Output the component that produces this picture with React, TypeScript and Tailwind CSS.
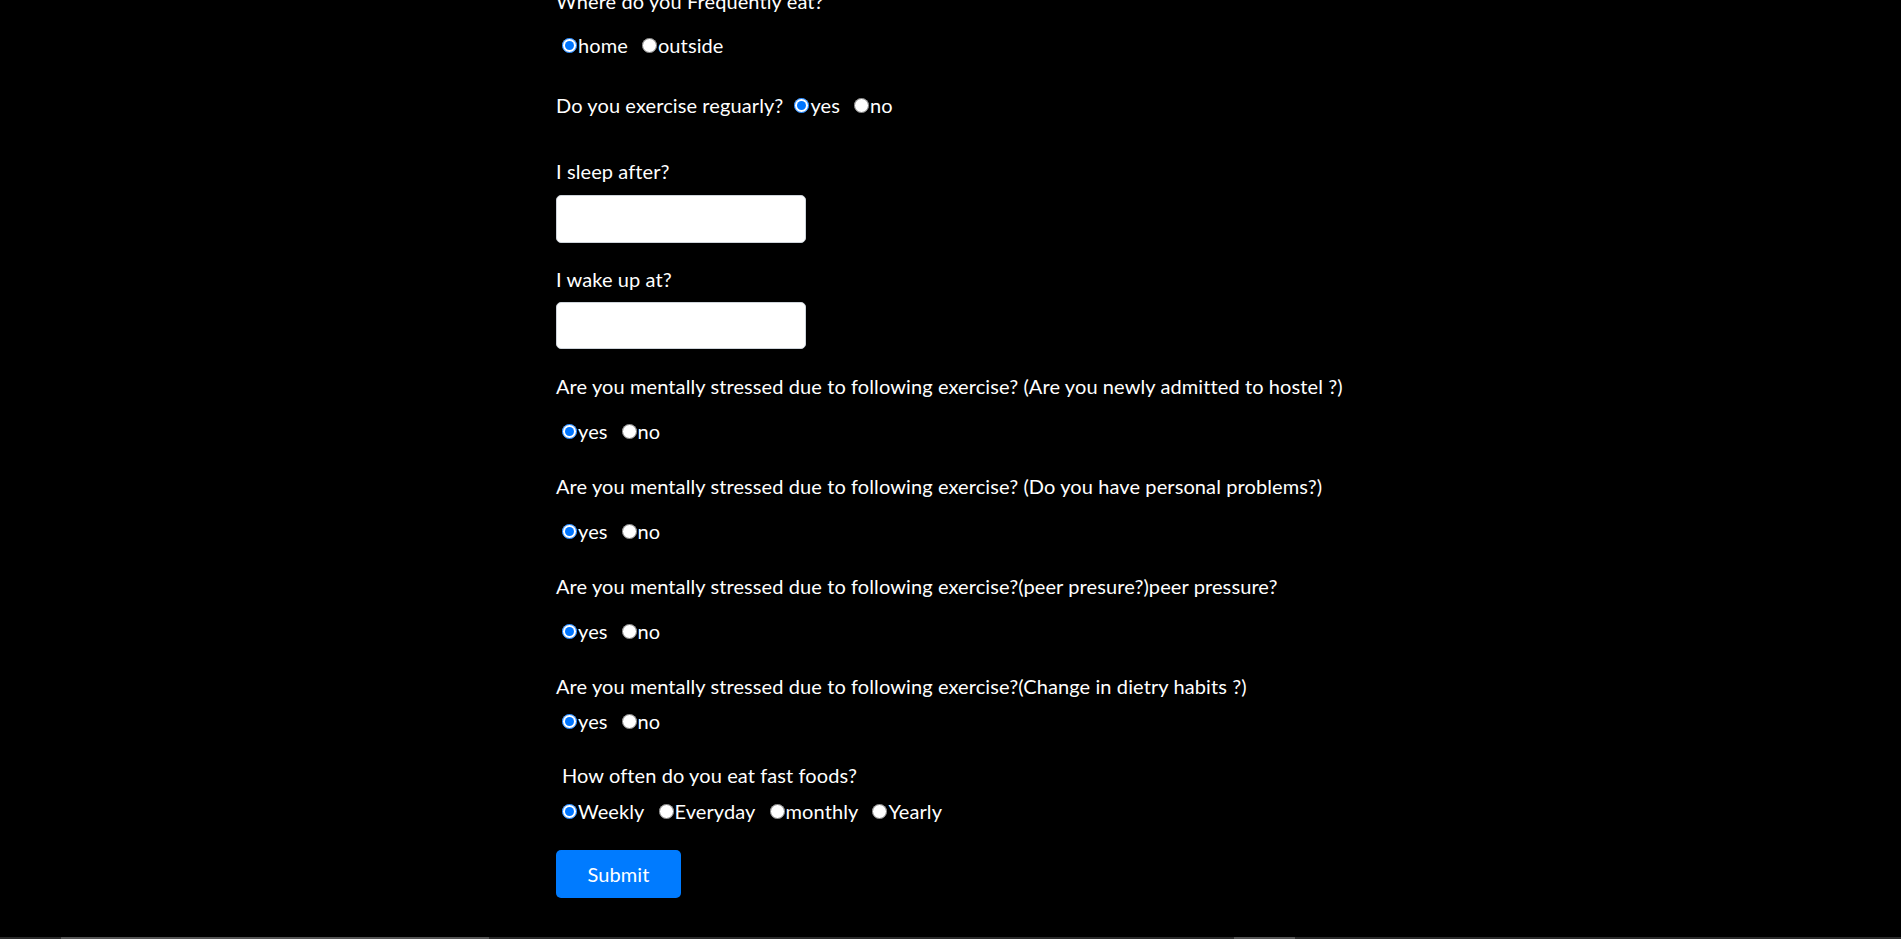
import React from "react";

interface Option {
  label: string;
  checked?: boolean;
}

const RadioRow: React.FC<{ name: string; options: Option[]; className?: string }> = ({ name, options, className }) => {
  return (
    <div className={`flex items-center h-[30px] ${className ?? ""}`}>
      {options.map((opt) => (
        <label key={opt.label} className="flex items-center mr-[8px]">
          <input
            type="radio"
            name={name}
            defaultChecked={opt.checked}
            className="w-[15px] h-[15px] ml-[6px] mr-[1px] accent-[#0075ff]"
          />
          {opt.label}
        </label>
      ))}
    </div>
  );
};

const yesNo: Option[] = [{ label: "yes", checked: true }, { label: "no" }];

const App: React.FC = () => {
  return (
    <div className="h-[939px] flex flex-col bg-black overflow-hidden font-['Lato',sans-serif]">
      <div className="flex-1 overflow-hidden">
        <form className="ml-[556px] -mt-[14px] text-white text-[20px] leading-[30px] tracking-[0.1px]">
          <p>Where do you Frequently eat?</p>
          <RadioRow
            name="eat"
            className="mt-[14px]"
            options={[{ label: "home", checked: true }, { label: "outside" }]}
          />

          <div className="flex items-center h-[30px] mt-[30px]">
            <span className="mr-[5px]">Do you exercise reguarly?</span>
            <RadioRow name="exercise" options={yesNo} />
          </div>

          <label className="block mt-[36px]">I sleep after?</label>
          <input type="text" className="block mt-[9px] w-[250px] h-[48px] bg-white border border-[#ced4da] rounded-[5px]" />

          <label className="block mt-[21px]">I wake up at?</label>
          <input type="text" className="block mt-[8px] w-[250px] h-[47px] bg-white border border-[#ced4da] rounded-[5px]" />

          <p className="mt-[22px]">Are you mentally stressed due to following exercise? (Are you newly admitted to hostel ?)</p>
          <RadioRow name="hostel" className="mt-[15px]" options={yesNo} />

          <p className="mt-[25px]">Are you mentally stressed due to following exercise? (Do you have personal problems?)</p>
          <RadioRow name="personal" className="mt-[15px]" options={yesNo} />

          <p className="mt-[25px]">Are you mentally stressed due to following exercise?(peer presure?)peer pressure?</p>
          <RadioRow name="peer" className="mt-[15px]" options={yesNo} />

          <p className="mt-[25px]">Are you mentally stressed due to following exercise?(Change in dietry habits ?)</p>
          <RadioRow name="diet" className="mt-[5px]" options={yesNo} />

          <p className="mt-[24px] pl-[6px]">How often do you eat fast foods?</p>
          <RadioRow
            name="fastfood"
            className="mt-[6px]"
            options={[{ label: "Weekly", checked: true }, { label: "Everyday" }, { label: "monthly" }, { label: "Yearly" }]}
          />

          <button
            type="button"
            className="mt-[24px] w-[125px] h-[48px] bg-[#007bff] text-white rounded-[5px] text-[20px]"
          >
            Submit
          </button>
        </form>
      </div>
      <div className="flex h-[2px] shrink-0">
        <div className="w-[61px] bg-[#2b2b2b]" />
        <div className="w-[428px] bg-[#555555]" />
        <div className="w-[745px] bg-[#2b2b2b]" />
        <div className="w-[61px] bg-[#555555]" />
        <div className="flex-1 bg-[#2b2b2b]" />
      </div>
    </div>
  );
};

export default App;
